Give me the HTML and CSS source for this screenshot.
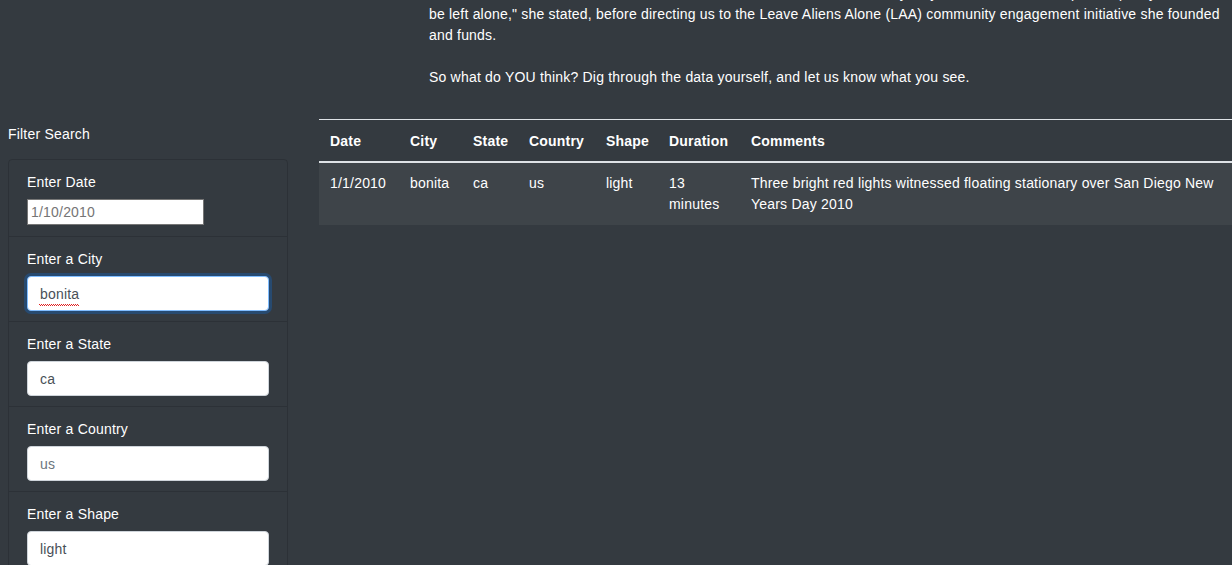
FILE: index.html
```html
<!DOCTYPE html>
<html lang="en">
<head>
<meta charset="utf-8">
<title>UFO Sightings</title>
<link rel="stylesheet" href="styles.css">
</head>
<body>
<article class="article">
  <p class="article-text">"It is our belief that the visitors mean us no harm whatsoever, and that they only wish to observe our planet quietly and to<br>be left alone," she stated, before directing us to the Leave Aliens Alone (LAA) community engagement initiative she founded and funds.</p>
  <p class="article-text">So what do YOU think? Dig through the data yourself, and let us know what you see.</p>
</article>

<main class="content">
  <aside class="sidebar">
    <div class="filter-title">Filter Search</div>
    <form class="filter-card">
      <div class="filter-item">
        <label class="filter-label" for="datetime">Enter Date</label>
        <input class="date-input" id="datetime" type="text" placeholder="1/10/2010">
      </div>
      <div class="filter-item">
        <label class="filter-label" for="city">Enter a City</label>
        <input class="form-control is-focused spell" id="city" type="text" value="bonita">
      </div>
      <div class="filter-item">
        <label class="filter-label" for="state">Enter a State</label>
        <input class="form-control" id="state" type="text" value="ca">
      </div>
      <div class="filter-item">
        <label class="filter-label" for="country">Enter a Country</label>
        <input class="form-control" id="country" type="text" placeholder="us">
      </div>
      <div class="filter-item">
        <label class="filter-label" for="shape">Enter a Shape</label>
        <input class="form-control" id="shape" type="text" value="light">
      </div>
      <div class="filter-item">
        <button class="filter-btn" type="button">Filter Table</button>
      </div>
    </form>
  </aside>

  <section class="table-wrap">
    <table class="ufo-table">
      <colgroup>
        <col class="c-date">
        <col class="c-city">
        <col class="c-state">
        <col class="c-country">
        <col class="c-shape">
        <col class="c-duration">
        <col class="c-comments">
      </colgroup>
      <thead>
        <tr>
          <th>Date</th>
          <th>City</th>
          <th>State</th>
          <th>Country</th>
          <th>Shape</th>
          <th>Duration</th>
          <th>Comments</th>
        </tr>
      </thead>
      <tbody>
        <tr>
          <td>1/1/2010</td>
          <td>bonita</td>
          <td>ca</td>
          <td>us</td>
          <td>light</td>
          <td>13 minutes</td>
          <td>Three bright red lights witnessed floating stationary over San Diego New Years Day 2010</td>
        </tr>
      </tbody>
    </table>
  </section>
</main>
</body>
</html>
```

FILE: styles.css
```css
* {
  box-sizing: border-box;
}

html, body {
  margin: 0;
  padding: 0;
  background: #343a40;
  color: #ffffff;
  font-family: "Liberation Sans", Arial, sans-serif;
  font-size: 14px;
  line-height: 21px;
  letter-spacing: 0.2px;
  overflow: hidden;
}

.article {
  margin: -17px 0 0 429px;
  width: 797px;
}

.article-text {
  margin: 0 0 21px 0;
}

.article-text:last-child {
  margin-bottom: 0;
}

.content {
  display: flex;
  align-items: flex-start;
  gap: 31px;
  padding-left: 8px;
  margin-top: 31px;
}

.sidebar {
  width: 280px;
  flex: 0 0 280px;
}

.filter-title {
  padding-top: 5px;
  margin-bottom: 14px;
  line-height: 21px;
}

.filter-card {
  margin: 0;
  border: 1px solid rgba(0, 0, 0, 0.14);
  border-radius: 4px;
}

.filter-item {
  display: flex;
  flex-direction: column;
  align-items: flex-start;
  padding: 12px 18px 10px 18px;
  border-top: 1px solid rgba(0, 0, 0, 0.14);
}

.filter-item:first-child {
  border-top: 0;
  padding-bottom: 11px;
}

.filter-label {
  display: block;
  line-height: 21px;
  margin-bottom: 6px;
  color: #ffffff;
}

.date-input {
  width: 177px;
  height: 26px;
  padding: 1px 3px;
  border: 1px solid #767676;
  border-radius: 0;
  background: #ffffff;
  font-family: "Liberation Sans", Arial, sans-serif;
  font-size: 14px;
  letter-spacing: 0.2px;
  color: #6b6b6b;
}

.date-input::placeholder {
  color: #757575;
  opacity: 1;
}

.form-control {
  display: block;
  width: 100%;
  height: 35px;
  padding: 6px 12px;
  border: 1px solid #ced4da;
  border-radius: 4px;
  background-color: #ffffff;
  font-family: "Liberation Sans", Arial, sans-serif;
  font-size: 14px;
  letter-spacing: 0.2px;
  line-height: 21px;
  color: #495057;
  outline: none;
}

.form-control::placeholder {
  color: #6c757d;
  opacity: 1;
}

.form-control.is-focused {
  border-color: #80bdff;
  box-shadow: 0 0 0 3px rgba(0, 123, 255, 0.25);
}

.spell {
  background-image:
    repeating-linear-gradient(90deg, #e02020 0 1px, transparent 1px 2px),
    repeating-linear-gradient(90deg, transparent 0 1px, #e02020 1px 2px);
  background-size: 40px 1px, 40px 1px;
  background-position: 11px 27px, 11px 28px;
  background-repeat: no-repeat;
}

.filter-btn {
  padding: 6px 12px;
  border: 1px solid #6c757d;
  border-radius: 4px;
  background: #343a40;
  color: #ffffff;
  font-family: "Liberation Sans", Arial, sans-serif;
  font-size: 14px;
}

.table-wrap {
  flex: 1 1 auto;
  min-width: 0;
}

.ufo-table {
  width: 100%;
  table-layout: fixed;
  border-collapse: collapse;
  color: #ffffff;
}

.c-date { width: 80px; }
.c-city { width: 63px; }
.c-state { width: 56px; }
.c-country { width: 77px; }
.c-shape { width: 63px; }
.c-duration { width: 82px; }

.ufo-table th,
.ufo-table td {
  padding: 10px 11px;
  text-align: left;
  vertical-align: top;
  line-height: 21px;
}

.ufo-table th {
  padding-top: 11px;
  padding-bottom: 9px;
  font-weight: bold;
  border-top: 1px solid #dee2e6;
  border-bottom: 2px solid #dee2e6;
}

.ufo-table tbody tr:nth-child(odd) {
  background: rgba(255, 255, 255, 0.05);
}
```
